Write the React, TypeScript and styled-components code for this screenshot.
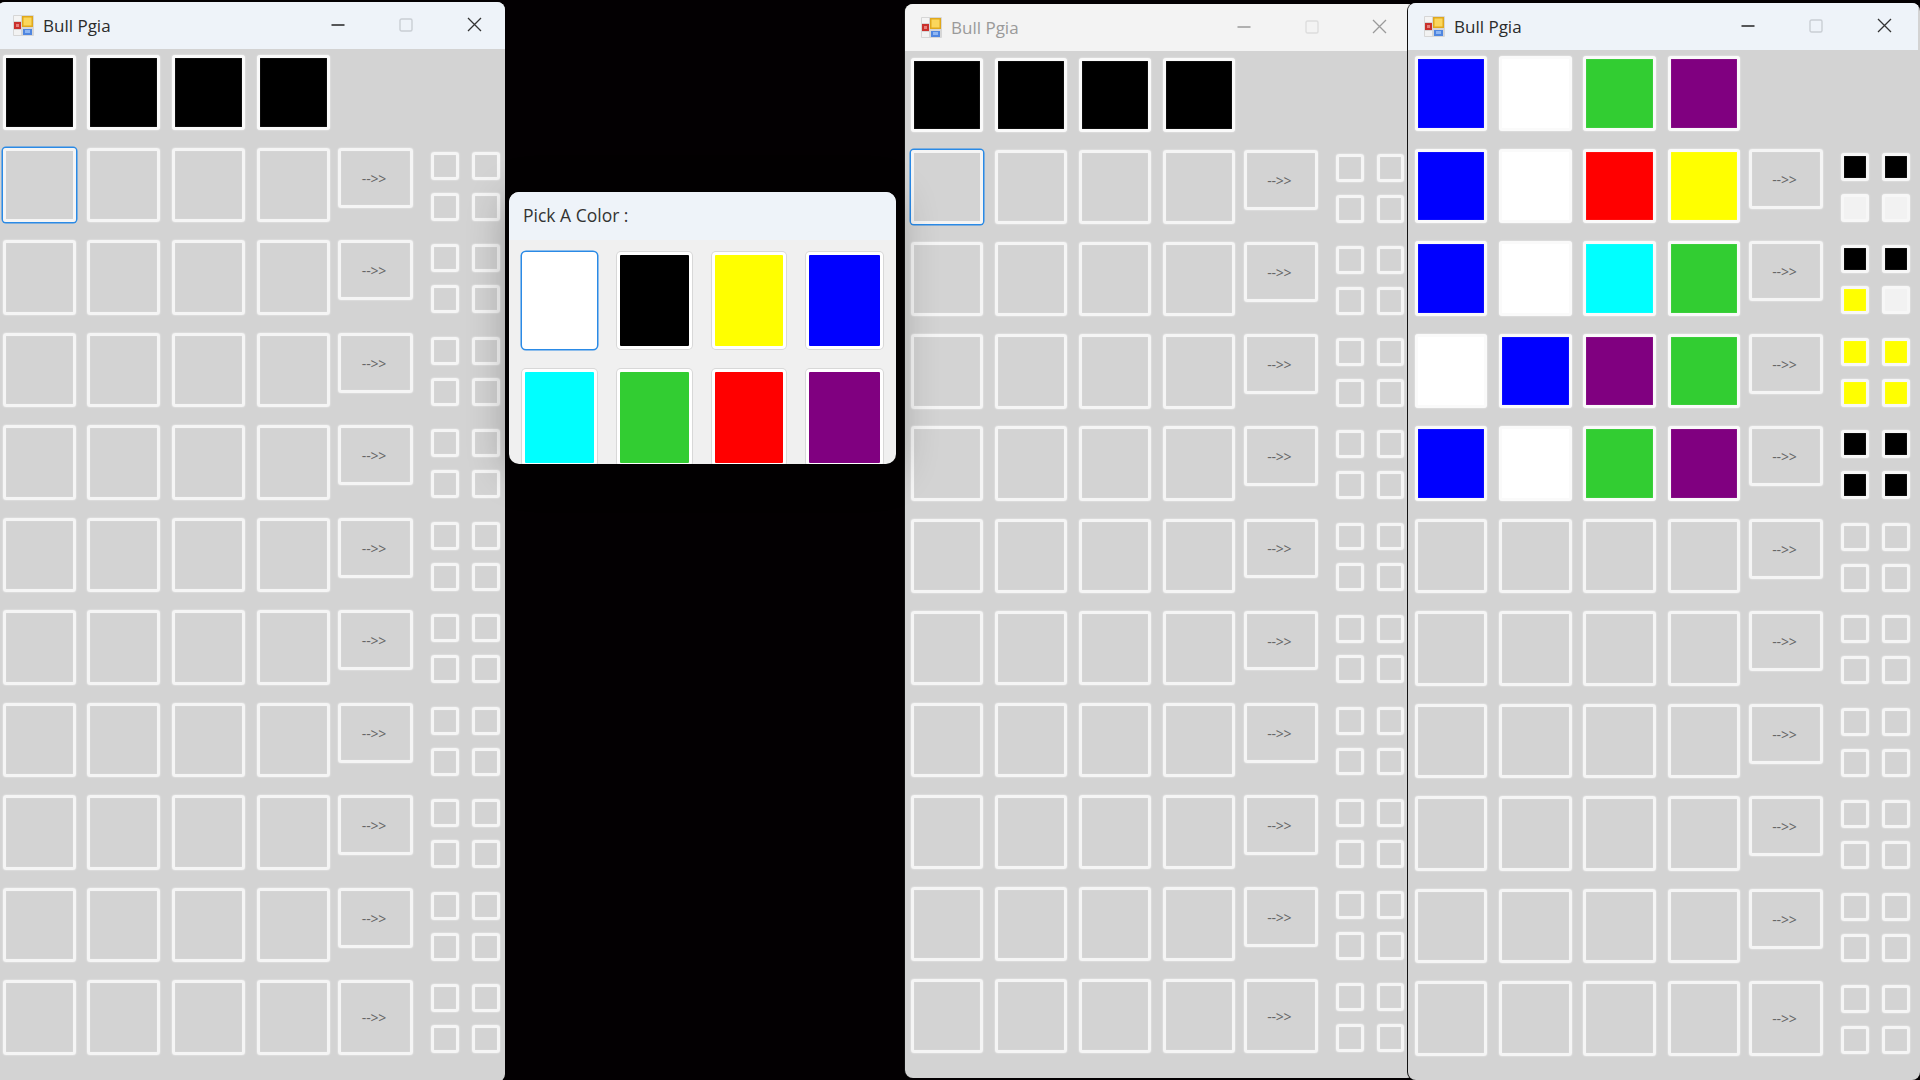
import styled, { createGlobalStyle } from 'styled-components'

/** types */
type Peg = string | null
interface GuessRow {
  pegs: Peg[]
  hints: Peg[]
}

const LIME = '#32cd32'
const HINT_BLANK = '#f2f2f2'
const SOFT_EDGE = '0 0 2px rgba(255, 255, 255, 0.75), inset 0 0 1px rgba(255, 255, 255, 0.5)'

const GlobalStyle = createGlobalStyle`
  html, body {
    margin: 0;
    padding: 0;
    width: 1920px;
    height: 1080px;
    overflow: hidden;
    background: #030002;
    font-family: "Open Sans", "Noto Sans", sans-serif;
  }
`

const Desktop = styled.div`
  position: relative;
  width: 1920px;
  height: 1080px;
  overflow: hidden;
  background: #030002;
`

const Window = styled.section<{
  $left: number
  $top: number
  $width: number
  $height: number
  $scale: number
  $vScale: number
  $layer: number
}>`
  --s: ${({ $scale }) => $scale};
  --v: ${({ $vScale }) => $vScale};
  position: absolute;
  left: ${({ $left }) => $left}px;
  top: ${({ $top }) => $top}px;
  width: ${({ $width }) => $width}px;
  height: ${({ $height }) => $height}px;
  z-index: ${({ $layer }) => $layer};
  border-radius: 8px;
  overflow: hidden;
  background: #d3d3d3;
  box-shadow: -1px 0 0 #111;
`

const TitleBar = styled.header<{ $active: boolean; $barWidth: number }>`
  display: flex;
  align-items: center;
  width: ${({ $barWidth }) => $barWidth}px;
  height: 47px;
  padding-left: 16px;
  box-sizing: border-box;
  background: ${({ $active }) => ($active ? '#eef3f9' : '#f3f3f3')};
  color: ${({ $active }) => ($active ? '#2b2b2b' : '#9a9a9a')};
`

const AppIcon = styled.svg`
  flex: none;
  width: 21px;
  height: 21px;
`

const TitleText = styled.span`
  margin-left: 9px;
  font-size: 17px;
  line-height: 20px;
  white-space: nowrap;
`

const Controls = styled.div`
  display: flex;
  margin-left: auto;
`

const ControlButton = styled.span`
  display: flex;
  align-items: center;
  justify-content: center;
  width: 68px;
  height: 47px;
  margin-top: -2px;
`

const Board = styled.div<{ $offset: number; $inset: number }>`
  display: flex;
  flex-direction: column;
  gap: calc(18px * var(--v));
  padding: ${({ $offset, $inset }) => `${$offset}px 0 0 ${$inset}px`};
`

const Row = styled.div`
  display: flex;
  align-items: flex-start;
  height: calc(74.5px * var(--v));
`

const Pegs = styled.div`
  display: flex;
  gap: calc(11.7px * var(--s));
`

const PegBox = styled.div<{ $color?: Peg; $focused?: boolean }>`
  width: calc(73px * var(--s));
  height: calc(74.5px * var(--v));
  box-sizing: border-box;
  border: 3px solid ${({ $color }) => ($color ? '#fafafa' : '#f5f5f5')};
  border-radius: 3px;
  background: ${({ $color }) => $color ?? 'transparent'};
  box-shadow: ${({ $focused }) => ($focused ? '0 0 0 1.5px #2a8ae6' : SOFT_EDGE)};
`

const ArrowButton = styled.button<{ $tall?: boolean }>`
  flex: none;
  width: calc(75px * var(--s));
  height: ${({ $tall }) => ($tall ? 'calc(74.5px * var(--v))' : 'calc(60px * var(--v))')};
  margin-left: calc(8.4px * var(--s));
  padding: 2px 3px 0 0;
  box-sizing: border-box;
  border: 3px solid #f5f5f5;
  border-radius: 3px;
  background: transparent;
  box-shadow: ${SOFT_EDGE};
  color: #666;
  font-family: "Open Sans", sans-serif;
  font-size: 14px;
  line-height: 16px;
  letter-spacing: -0.2px;
`

const HintGrid = styled.div`
  display: grid;
  grid-template-columns: repeat(2, calc(28px * var(--s)));
  grid-auto-rows: calc(28px * var(--v));
  column-gap: calc(13px * var(--s));
  row-gap: calc(13px * var(--v));
  margin: calc(4px * var(--v)) 0 0 calc(18px * var(--s));
`

const Hint = styled.div<{ $color?: Peg }>`
  box-sizing: border-box;
  border: 3px solid ${({ $color }) => ($color ? '#f7f7f7' : '#f5f5f5')};
  border-radius: 3px;
  background: ${({ $color }) => $color ?? 'transparent'};
  box-shadow: ${SOFT_EDGE};
`

const Dialog = styled.section`
  position: absolute;
  left: 509px;
  top: 192px;
  z-index: 5;
  width: 387px;
  height: 272px;
  border-radius: 10px;
  overflow: hidden;
  background: #f0f0f0;
  box-shadow: 0 6px 42px rgba(0, 0, 0, 0.3);
`

const DialogTitle = styled.header`
  height: 48px;
  padding: 0 0 0 14px;
  background: #eef3f9;
  color: #333;
  font-size: 17.5px;
  line-height: 47px;
`

const Swatches = styled.div`
  display: grid;
  grid-template-columns: 75px 74.5px 74.5px 77px;
  grid-auto-rows: 97px;
  column-gap: 20px;
  row-gap: 20px;
  padding: 12px 0 0 13px;
`

const Swatch = styled.button<{ $color: string; $focused?: boolean }>`
  padding: 0;
  box-sizing: border-box;
  border: 3px solid #fff;
  border-radius: 4px;
  background: ${({ $color }) => $color};
  box-shadow: ${({ $focused }) => ($focused ? '0 0 0 1.5px #2a8ae6' : '0 0 0 1px #d8d8d8')};
`

const Logo = () => (
  <AppIcon viewBox="0 0 21 21">
    <rect width="21" height="21" rx="1" fill="#d6d6d6" />
    <rect x="1" y="1" width="7" height="5" fill="#f4f4f4" />
    <rect x="9" y="1" width="11" height="11" fill="#e0a81c" />
    <rect x="10.5" y="2.5" width="8" height="8" fill="#fbd75c" />
    <rect x="1" y="7" width="7" height="7" fill="#c9302c" />
    <rect x="3" y="9" width="3" height="3" fill="#e8807c" />
    <rect x="1" y="15" width="7" height="5" fill="#f2f2f2" />
    <rect x="10" y="14" width="9" height="6" fill="#4f86e0" />
    <rect x="12" y="15" width="5" height="3" fill="#8fb6f2" />
  </AppIcon>
)

const WindowControls = ({ active = true }: { active?: boolean }) => {
  const ink = active ? '#222' : '#9a9a9a'
  return (
    <Controls>
      <ControlButton>
        <svg width="14" height="14" viewBox="0 0 14 14">
          <path d="M0.5 7h13" stroke={ink} strokeWidth="1.4" />
        </svg>
      </ControlButton>
      <ControlButton>
        <svg width="14" height="14" viewBox="0 0 14 14">
          <rect x="1" y="1" width="12" height="12" rx="1.5" fill="none" stroke={active ? '#c9ced4' : '#dddddd'} strokeWidth="1.4" />
        </svg>
      </ControlButton>
      <ControlButton>
        <svg width="15" height="15" viewBox="0 0 15 15">
          <path d="M1 1l13 13M14 1L1 14" stroke={active ? '#333' : '#9a9a9a'} strokeWidth="1.3" />
        </svg>
      </ControlButton>
    </Controls>
  )
}

const EMPTY_ROW: GuessRow = { pegs: [null, null, null, null], hints: [null, null, null, null] }
const blankBoard = () => Array.from({ length: 10 }, () => EMPTY_ROW)

const SOLVED_BOARD: GuessRow[] = [
  { pegs: ['#0000ff', '#ffffff', '#ff0000', '#ffff00'], hints: ['#000', '#000', HINT_BLANK, HINT_BLANK] },
  { pegs: ['#0000ff', '#ffffff', '#00ffff', LIME], hints: ['#000', '#000', '#ffff00', HINT_BLANK] },
  { pegs: ['#ffffff', '#0000ff', '#800080', LIME], hints: ['#ffff00', '#ffff00', '#ffff00', '#ffff00'] },
  { pegs: ['#0000ff', '#ffffff', LIME, '#800080'], hints: ['#000', '#000', '#000', '#000'] },
  ...Array.from({ length: 6 }, () => EMPTY_ROW),
]

const DIALOG_COLORS = ['#ffffff', '#000000', '#ffff00', '#0000ff', '#00ffff', LIME, '#ff0000', '#800080']

interface GameProps {
  left: number
  top: number
  width: number
  height: number
  scale: number
  vScale: number
  offset: number
  inset: number
  layer: number
  barWidth: number
  active?: boolean
  code: Peg[]
  rows: GuessRow[]
  focusFirst?: boolean
}

const GameWindow = ({ left, top, width, height, scale, vScale, offset, inset, layer, barWidth, active = true, code, rows, focusFirst }: GameProps) => (
  <Window $left={left} $top={top} $width={width} $height={height} $scale={scale} $vScale={vScale} $layer={layer}>
    <TitleBar $active={active} $barWidth={barWidth}>
      <Logo />
      <TitleText>Bull Pgia</TitleText>
      <WindowControls active={active} />
    </TitleBar>
    <Board $offset={offset} $inset={inset}>
      <Row>
        <Pegs>
          {code.map((color, i) => (
            <PegBox key={i} $color={color} />
          ))}
        </Pegs>
      </Row>
      {rows.map((row, r) => (
        <Row key={r}>
          <Pegs>
            {row.pegs.map((color, i) => (
              <PegBox key={i} $color={color} $focused={focusFirst && r === 0 && i === 0} />
            ))}
          </Pegs>
          <ArrowButton $tall={r === rows.length - 1}>{'-->>'}</ArrowButton>
          <HintGrid>
            {row.hints.map((color, i) => (
              <Hint key={i} $color={color} />
            ))}
          </HintGrid>
        </Row>
      ))}
    </Board>
  </Window>
)

const App = () => {
  const blackCode: Peg[] = ['#000', '#000', '#000', '#000']
  return (
    <Desktop>
      <GlobalStyle />
      <GameWindow left={-3} top={2} width={508} height={1080} scale={1} vScale={1} offset={6} inset={5.5} layer={1} barWidth={511} code={blackCode} rows={blankBoard()} focusFirst />
      <Dialog>
        <DialogTitle>Pick A Color :</DialogTitle>
        <Swatches>
          {DIALOG_COLORS.map((color, i) => (
            <Swatch key={color} $color={color} $focused={i === 0} />
          ))}
        </Swatches>
      </Dialog>
      <GameWindow left={905} top={4} width={510} height={1074} scale={0.993} vScale={0.996} offset={7} inset={5.5} layer={2} barWidth={508.5} active={false} code={blackCode} rows={blankBoard()} focusFirst />
      <GameWindow left={1408} top={3} width={512} height={1077} scale={0.996} vScale={1} offset={6} inset={6.5} layer={3} barWidth={510} code={['#0000ff', '#ffffff', LIME, '#800080']} rows={SOLVED_BOARD} />
    </Desktop>
  )
}

export default App
